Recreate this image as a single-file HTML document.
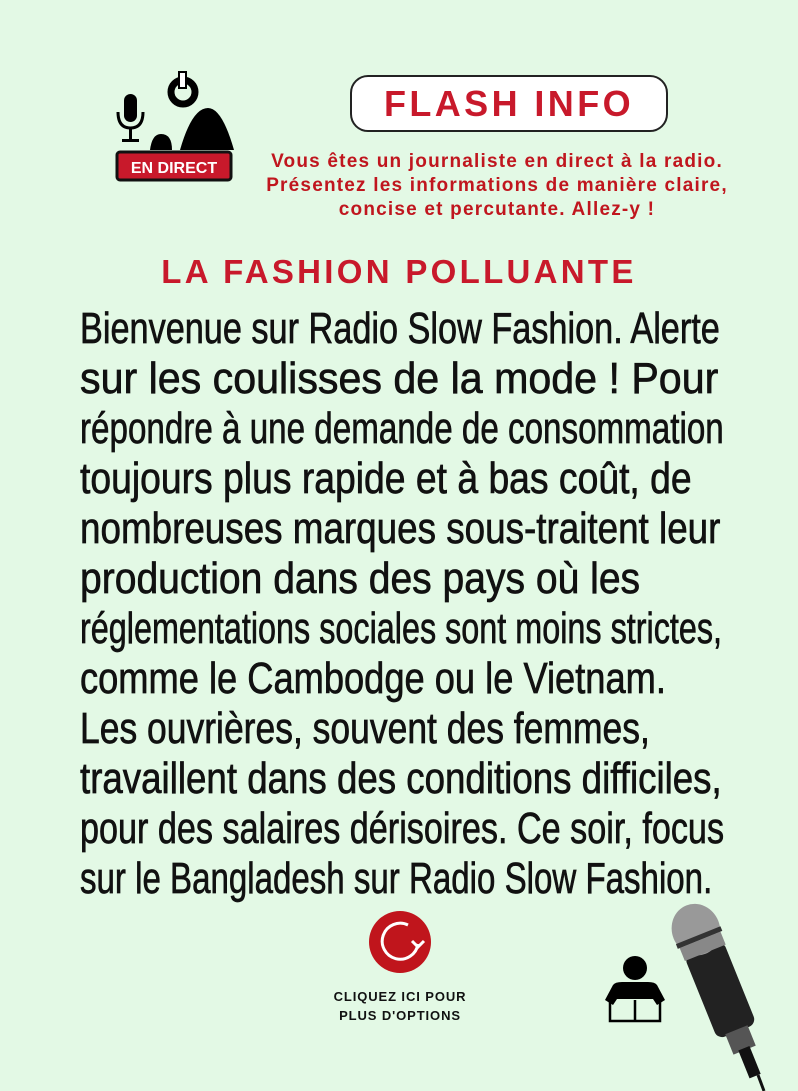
<!DOCTYPE html>
<html><head><meta charset="utf-8"><style>
body{margin:0;width:798px;height:1091px;background:#e3f9e5;position:relative;overflow:hidden;font-family:"Liberation Sans",sans-serif}
.abs{position:absolute}
.flash{left:350px;top:75px;width:314px;height:53px;border:2px solid #222;border-radius:18px;background:#fff;color:#c8192b;font-weight:bold;font-size:36px;letter-spacing:3.4px;text-align:center;line-height:53px}
.sub{left:220px;top:150px;width:554px;text-align:center;color:#c0161e;font-weight:bold;font-size:19px;letter-spacing:1.2px;line-height:24px}
.title{left:0;width:798px;top:253px;text-align:center;color:#c8192b;font-weight:bold;font-size:33px;letter-spacing:3.3px}
.ln{position:absolute;left:80px;font-size:44px;line-height:50px;white-space:nowrap;transform-origin:0 0;color:#111;-webkit-text-stroke:0.7px #111}
.cl{left:290px;width:220px;top:987px;text-align:center;font-size:13px;letter-spacing:0.9px;font-weight:bold;line-height:19px;color:#111}
</style></head><body>
<svg class="abs" style="left:110px;top:70px" width="130" height="115" viewBox="0 0 130 115">
<rect x="14" y="24" width="13" height="28" rx="6.5" fill="#000"/>
<path d="M8 42 Q8 58 20.5 58 Q33 58 33 42" stroke="#000" stroke-width="3" fill="none"/>
<rect x="19" y="58" width="3" height="12" fill="#000"/><rect x="12" y="69" width="17" height="3" fill="#000"/>
<circle cx="73" cy="22" r="12" fill="none" stroke="#000" stroke-width="7"/>
<rect x="69" y="2" width="7" height="16" fill="#fff" stroke="#000" stroke-width="2"/>
<path d="M70 80 Q82 38 98 38 Q112 38 124 80Z" fill="#000"/>
<path d="M40 80 Q42 64 51 64 Q62 64 62 80Z" fill="#000"/>
<rect x="7" y="82" width="114" height="28" rx="3" fill="#c8192b" stroke="#111" stroke-width="3"/>
<text x="64" y="103" text-anchor="middle" fill="#fff" font-family="Liberation Sans" font-weight="bold" font-size="16">EN DIRECT</text>
</svg>
<div class="abs flash">FLASH INFO</div>
<div class="abs sub">Vous êtes un journaliste en direct à la radio.<br>Présentez les informations de manière claire,<br>concise et percutante. Allez-y !</div>
<div class="abs title">LA FASHION POLLUANTE</div>
<div id="t">
<div class="ln" data-w="640" style="top:304px">Bienvenue sur Radio Slow Fashion. Alerte</div>
<div class="ln" data-w="638" style="top:354px">sur les coulisses de la mode ! Pour</div>
<div class="ln" data-w="644" style="top:404px">répondre à une demande de consommation</div>
<div class="ln" data-w="612" style="top:454px">toujours plus rapide et à bas coût, de</div>
<div class="ln" data-w="640" style="top:504px">nombreuses marques sous-traitent leur</div>
<div class="ln" data-w="560" style="top:554px">production dans des pays où les</div>
<div class="ln" data-w="642" style="top:604px">réglementations sociales sont moins strictes,</div>
<div class="ln" data-w="586" style="top:654px">comme le Cambodge ou le Vietnam.</div>
<div class="ln" data-w="570" style="top:704px">Les ouvrières, souvent des femmes,</div>
<div class="ln" data-w="642" style="top:754px">travaillent dans des conditions difficiles,</div>
<div class="ln" data-w="644" style="top:804px">pour des salaires dérisoires. Ce soir, focus</div>
<div class="ln" data-w="632" style="top:854px">sur le Bangladesh sur Radio Slow Fashion.</div>
</div>
<svg class="abs" style="left:368px;top:910px" width="64" height="64" viewBox="0 0 64 64">
<circle cx="32" cy="32" r="31" fill="#c0151c"/>
<path d="M40 15 A18 18 0 1 0 50 34" stroke="#fff" stroke-width="3" fill="none"/>
<path d="M44 31 L50 37 L56 31" stroke="#fff" stroke-width="3" fill="none"/>
</svg>
<div class="abs cl">CLIQUEZ ICI POUR<br>PLUS D'OPTIONS</div>
<svg class="abs" style="left:602px;top:955px" width="70" height="72" viewBox="0 0 70 72">
<circle cx="33" cy="13" r="12" fill="#000"/>
<path d="M3 45 L11 30 Q13 27 20 27 L46 27 Q53 27 55 30 L63 45 L55 50 L51 44 L15 44 L11 50Z" fill="#000"/>
<path d="M8 44 L8 66 L33 66 L58 66 L58 44 M33 45 L33 66" stroke="#000" stroke-width="2.5" fill="none"/>
</svg>
<svg class="abs" style="left:660px;top:900px" width="120" height="191" viewBox="0 0 120 191">
<g transform="rotate(-22 35 30)">
<rect x="15" y="50" width="42" height="90" rx="8" fill="#222"/>
<rect x="24" y="138" width="24" height="22" fill="#555"/>
<rect x="30" y="158" width="12" height="30" fill="#111"/>
<ellipse cx="36" cy="30" rx="24" ry="26" fill="#999"/>
<rect x="12" y="36" width="48" height="5" fill="#333"/>
<rect x="14" y="41" width="44" height="14" fill="#888"/>
</g>
<path d="M98 175 L104 191" stroke="#111" stroke-width="3"/>
</svg>
<script>
document.querySelectorAll('.ln').forEach(function(e){var w=e.scrollWidth;e.style.transform='scaleX('+(e.dataset.w/w)+')';});
</script>
</body></html>
